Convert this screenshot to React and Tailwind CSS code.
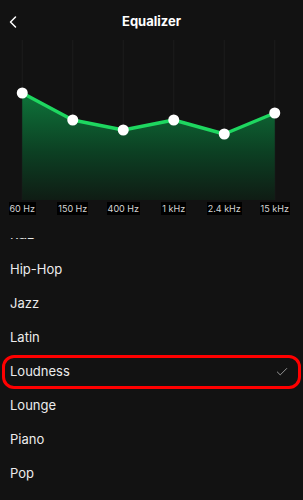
import { ChevronLeft, Check } from 'lucide-react'

const BANDS = [
  { label: '60 Hz', y: 49 },
  { label: '150 Hz', y: 76 },
  { label: '400 Hz', y: 86 },
  { label: '1 kHz', y: 76 },
  { label: '2.4 kHz', y: 90 },
  { label: '15 kHz', y: 69 },
]

const PRESETS = ['R&B', 'Hip-Hop', 'Jazz', 'Latin', 'Loudness', 'Lounge', 'Piano', 'Pop', 'Rock']

function colX(i) {
  return 22.25 + i * 50.5
}

function Chart() {
  const pts = BANDS.map((b, i) => `${colX(i)},${b.y}`).join(' ')
  const area = `${colX(0)},156 ${pts} ${colX(5)},156`
  return (
    <svg width="303" height="156" viewBox="0 0 303 156" className="block overflow-visible">
      <defs>
        <linearGradient id="eqfill" x1="0" y1="0" x2="0" y2="1">
          <stop offset="0" stopColor="#0e743a" />
          <stop offset="0.55" stopColor="#0c4023" />
          <stop offset="1" stopColor="#0f1c14" />
        </linearGradient>
      </defs>
      {BANDS.map((b, i) => (
        <line key={b.label} x1={colX(i)} y1="-4" x2={colX(i)} y2="156" stroke="#1d1d1d" strokeWidth="1" />
      ))}
      <polygon points={area} fill="url(#eqfill)" />
      <polyline points={pts} fill="none" stroke="#1ed760" strokeWidth="3.5" strokeLinejoin="round" />
      {BANDS.map((b, i) => (
        <circle key={b.label} cx={colX(i)} cy={b.y} r="5.5" fill="#ffffff" />
      ))}
    </svg>
  )
}

export default function App() {
  return (
    <div
      className="h-[500px] w-[303px] overflow-hidden bg-[#121212] text-white"
      style={{ fontFamily: 'Inter, "Noto Sans", sans-serif' }}
    >
      <div className="relative flex h-[44px] items-center justify-center">
        <ChevronLeft className="absolute left-[3px] top-[12px] h-[20px] w-[20px] text-white" strokeWidth={1.8} />
        <h1 className="text-[13px] font-bold">Equalizer</h1>
      </div>

      <Chart />

      <div className="ml-[-3px] grid h-[16px] w-[303px] grid-cols-6 items-center">
        {BANDS.map((b) => (
          <div key={b.label} className="flex justify-center">
            <span className="bg-black px-[1px] text-[9px] leading-[13px] text-[#d4d4d4]">{b.label}</span>
          </div>
        ))}
      </div>

      <div className="mt-[22px] h-[262px] overflow-hidden">
        <div className="mt-[-20px]">
          {PRESETS.map((name) =>
            name === 'Loudness' ? (
              <div
                key={name}
                className="mx-[2px] flex h-[34px] items-center justify-between rounded-[12px] border-[3px] border-[#ff0000] pl-[5px] pr-[9px]"
              >
                <span className="text-[13px] text-[#ececec]">{name}</span>
                <Check className="h-[14px] w-[14px] text-[#a8a8a8]" strokeWidth={1.5} />
              </div>
            ) : (
              <div key={name} className="flex h-[34.2px] items-center pl-[10px]">
                <span className="text-[13px] text-[#ececec]">{name}</span>
              </div>
            )
          )}
        </div>
      </div>
    </div>
  )
}
